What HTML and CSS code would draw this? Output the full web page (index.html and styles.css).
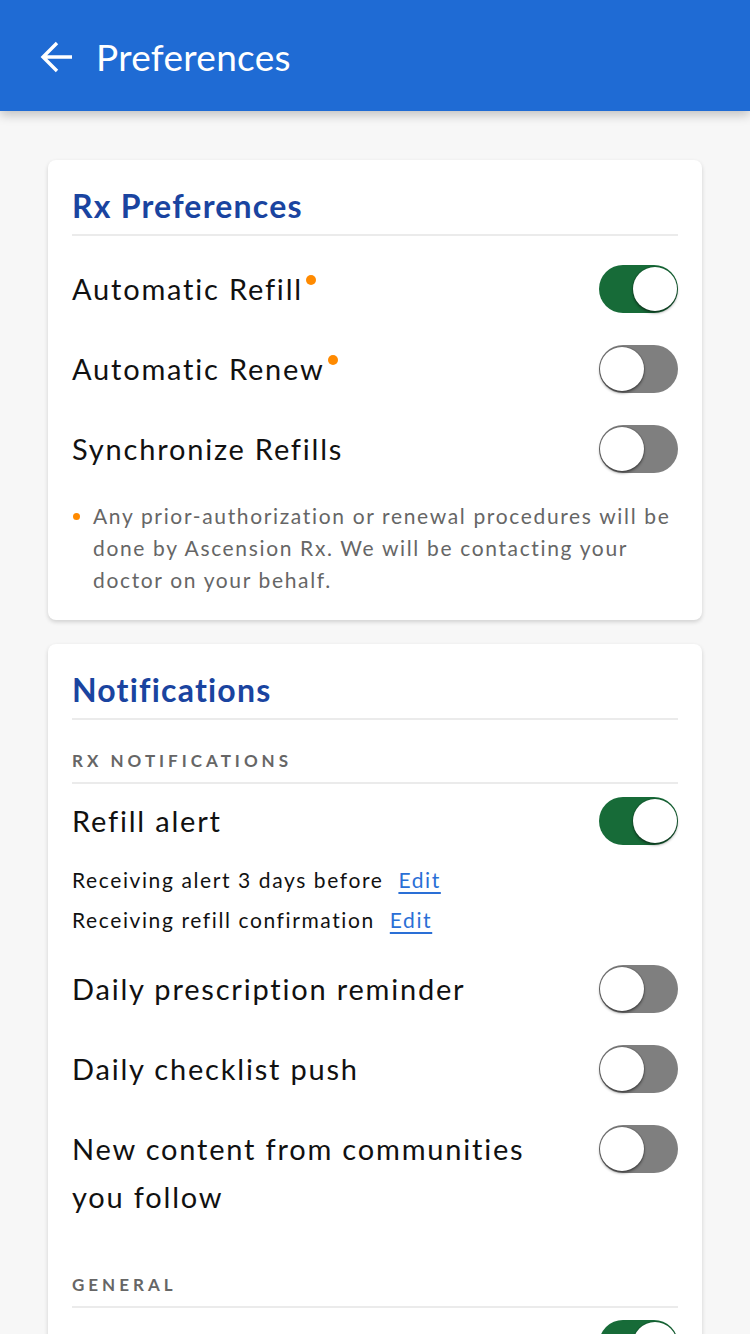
FILE: index.html
```html
<!DOCTYPE html>
<html lang="en">
<head>
<meta charset="utf-8">
<title>Preferences</title>
<link rel="stylesheet" href="styles.css">
</head>
<body>
<header class="appbar">
  <svg class="back" width="34" height="34" viewBox="0 0 34 34" aria-hidden="true">
    <path d="M32 17H3M17 3L3 17l14 14" fill="none" stroke="#fff" stroke-width="3.4" stroke-linecap="butt" stroke-linejoin="miter"/>
  </svg>
  <h1 class="appbar-title">Preferences</h1>
</header>

<main class="content">
  <section class="card">
    <h2 class="card-title">Rx Preferences</h2>
    <div class="rows rows-rx">
      <div class="row">
        <span class="label">Automatic Refill<span class="dot"></span></span>
        <span class="toggle on"><span class="knob"></span></span>
      </div>
      <div class="row">
        <span class="label">Automatic Renew<span class="dot"></span></span>
        <span class="toggle"><span class="knob"></span></span>
      </div>
      <div class="row">
        <span class="label">Synchronize Refills</span>
        <span class="toggle"><span class="knob"></span></span>
      </div>
    </div>
    <p class="footnote"><span class="fdot"></span>Any prior-authorization or renewal procedures will be done by Ascension Rx. We will be contacting your doctor on your behalf.</p>
  </section>

  <section class="card">
    <h2 class="card-title">Notifications</h2>
    <h3 class="section-label">RX NOTIFICATIONS</h3>
    <div class="row refill">
      <span class="label">Refill alert</span>
      <span class="toggle on"><span class="knob"></span></span>
    </div>
    <div class="subs">
      <p class="sub">Receiving alert 3 days before <a href="#" class="edit">Edit</a></p>
      <p class="sub">Receiving refill confirmation <a href="#" class="edit">Edit</a></p>
    </div>
    <div class="row daily">
      <span class="label">Daily prescription reminder</span>
      <span class="toggle"><span class="knob"></span></span>
    </div>
    <div class="row checklist">
      <span class="label">Daily checklist push</span>
      <span class="toggle"><span class="knob"></span></span>
    </div>
    <div class="row multi">
      <span class="label wrap">New content from communities you follow</span>
      <span class="toggle"><span class="knob"></span></span>
    </div>
    <h3 class="section-label general">GENERAL</h3>
    <div class="row last">
      <span class="label">New resources available</span>
      <span class="toggle on"><span class="knob"></span></span>
    </div>
  </section>
</main>
</body>
</html>
```

FILE: styles.css
```css
* { box-sizing: border-box; }
html, body { margin: 0; padding: 0; }
body {
  background: #f7f7f7;
  font-family: Lato, "Noto Sans", sans-serif;
  color: #111;
  width: 750px;
  overflow: hidden;
}
.appbar {
  height: 111px;
  background: #1f6bd4;
  display: flex;
  align-items: center;
  padding-left: 40px;
  box-shadow: 0 4px 10px rgba(0,0,0,0.22);
  position: relative;
  z-index: 1;
}
.back { display: block; margin-top: 2px; }
.appbar-title {
  margin: 0 0 0 22px;
  color: #fff;
  font-weight: 400;
  font-size: 37px;
  letter-spacing: 0.3px;
  line-height: 1;
  padding-top: 2px;
}
.content {
  padding: 49px 48px 0;
  display: flex;
  flex-direction: column;
  gap: 24px;
}
.card {
  background: #fff;
  border-radius: 8px;
  box-shadow: 0 2px 4px rgba(0,0,0,0.16);
  padding: 24px 24px 24px;
}
.card-title {
  margin: 0;
  color: #1a44a0;
  font-size: 32px;
  font-weight: 700;
  letter-spacing: 1.2px;
  line-height: 40px;
  padding-top: 2px;
  padding-bottom: 8px;
  border-bottom: 2px solid #ebebeb;
}
.rows-rx {
  display: flex;
  flex-direction: column;
  gap: 32px;
  padding-top: 29px;
}
.row {
  display: flex;
  align-items: center;
  justify-content: space-between;
  min-height: 48px;
}
.label {
  font-size: 29px;
  letter-spacing: 1.8px;
  line-height: 48px;
  color: #111;
  position: relative;
}
.dot {
  display: inline-block;
  width: 10px;
  height: 10px;
  border-radius: 50%;
  background: #ff8a00;
  vertical-align: top;
  margin: 10px 0 0 3px;
}
.toggle {
  flex: none;
  width: 79px;
  height: 48px;
  border-radius: 24px;
  background: #7f7f7f;
  position: relative;
  display: block;
}
.toggle.on { background: #176b38; }
.knob {
  position: absolute;
  top: 2px;
  left: 1px;
  width: 44px;
  height: 44px;
  border-radius: 50%;
  background: #fff;
  box-shadow: 0 2px 3px rgba(0,0,0,0.45), 0 0 0 1px rgba(0,0,0,0.12);
}
.toggle.on .knob { left: auto; right: 1px; }
.footnote {
  margin: 27px 0 0;
  padding-left: 21px;
  position: relative;
  font-size: 21px;
  line-height: 32px;
  letter-spacing: 1.65px;
  color: #666;
}
.fdot {
  position: absolute;
  left: 1px;
  top: 13px;
  width: 7px;
  height: 7px;
  border-radius: 50%;
  background: #ff8a00;
}
.section-label {
  margin: 0;
  padding-top: 29px;
  padding-bottom: 9px;
  line-height: 24px;
  font-size: 17px;
  font-weight: 700;
  letter-spacing: 4px;
  color: #666;
  border-bottom: 2px solid #ebebeb;
}
.row.refill { margin-top: 13px; }
.subs { margin-top: 15px; }
.sub {
  margin: 0;
  font-size: 21px;
  line-height: 40px;
  letter-spacing: 1.6px;
  color: #111;
}
.edit {
  color: #2a6fd6;
  margin-left: 8px;
  text-decoration: underline;
  text-underline-offset: 4px;
}
.row.daily { margin-top: 25px; }
.row.checklist { margin-top: 32px; }
.row.multi { margin-top: 32px; align-items: flex-start; }
.label.wrap { width: 480px; }
.section-label.general { margin-top: 23px; }
.row.last { margin-top: 12px; }
```
